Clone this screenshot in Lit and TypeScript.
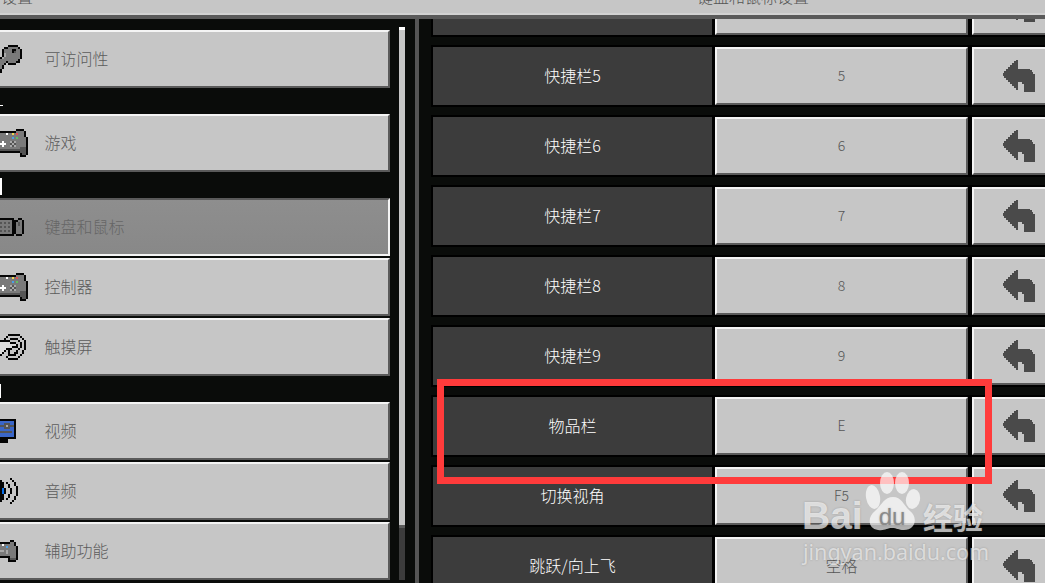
import { LitElement, html, css, svg } from "lit";
import { customElement } from "lit/decorators.js";

const PAL: Record<string, string> = {
  K: "#050505", G: "#7a7a7a", D: "#555555", L: "#a9a9a9", W: "#ffffff", H: "#dcdcdc",
  Y: "#f0d850", R: "#e05050", B: "#4aa0e8", V: "#60c060", S: "#3a66c8", M: "#0a6fe8",
};

const ICONS: Record<string, string[]> = {
  key: [
    "....KKKKK..", "..KKGGGGGK.", ".KGGGGKKGGK", ".KGGGGKDGGK", ".KLGGGGGGGK", ".KLGGGGGGGK", "KLGGGGGGGGK",
    "GGGGGGGGGK.", "GGGKGGGGKK.", "GGK.KKKK...", "GK.........", "GK.........", "K..........", "K..........",
  ],
  pad: [
    "........KKKK..", "KKKKKKKKGGGGK.", "GGGWGGYGRGGGK.", "GGGGGGGGGGGGK.", "GGGGGGBGVGGGGK", "GGGGGGGGGGGGGK", "GWGGGLDLGGGGGK",
    "WWWGGDLDGGGGGK", "GWGGGLDLGGGGGK", "GGGGGGGGGGDDDK", "DDDDDDDDDDDDDK", "KKKKKKKKKKDDDK", "..........KDDK", "..........KKK.",
  ],
  mouse: [
    "KKKKKKK..KK.", "GGGGGGKKKGGK", "DGDGDGKKGDGK", "GGGGGGKKGDGK", "DGDGDGKKGGGK", "GGGGGGKKGGGK", "DGDGDGKKGGGK", "GGGGGGKKGGGK", "KKKKKKK.KKK.",
  ],
  touch: [
    "....KKKKKK...", "...K......K..", "..K..KKKK..K.", "KKKKK....K..K", "HHHHHKKK..K.K", "HHHHHHHHK.K.K", "HHHHHHKKK.K.K",
    "HHHKKK...K..K", "HHK.K...K..K.", "HK..K..KK..K.", "K...KKKK..K..", "...K.....K...", "....KKKKK....",
  ],
  video: [
    "KKKKKKKK", "SSSSSSSK", "SSDDDSSK", "DDDLDDDK", "SSDDDSSK", "SSSSSSSK", "DDDDDDSK", "SSSSSSSK", "SSSSSSSK", "KKKKKKKK", "KKKK....", "KKKK....",
  ],
  audio: [
    ".....K...", "K.....K..", "KK.K...K.", "KK..K..K.", "KK..K...K", "KMK..K..K", "KMK..K..K", "KMK..K..K", "KK..K...K", "KK..K..K.", "KK.K...K.", "K.....K..", ".....K...",
  ],
  assist: [
    ".....KK..", "KKKKKGGK.", "GWGGGGGK.", "GGGBGGGGK", "GGGGGGGGK", "LLGLGGGGK", "GGGLGGGGK", "GGGGGGGGK", "KKKKKGGGK", "....KDDDK", "....KKKK.",
  ],
};

function pixelIcon(name: string) {
  const rows = ICONS[name];
  const w = rows[0].length;
  const h = rows.length;
  return html`<svg class="pix" width=${w * 2} height=${h * 2} viewBox="0 0 ${w} ${h}" shape-rendering="crispEdges">
    ${rows.map((r, y) =>
      [...r].map((c, x) =>
        c === "." ? null : svg`<rect x=${x} y=${y} width="1" height="1" fill=${PAL[c]}></rect>`
      )
    )}
  </svg>`;
}

const UNDO = html`<svg class="undo" width="32" height="32" viewBox="0 0 32 32" shape-rendering="crispEdges">
  <path fill="#4a4a4a" d="M13 0H15V9H27V10H29V12H30V14H32V32H21V24H19V22H15V30H13V28H11V26H9V24H7V22H5V20H3V18H1V16H0V13H1V11H3V9H5V7H7V5H9V3H11V1H13Z"></path>
</svg>`;

type Nav = { icon: string; label: string; active?: boolean };
type Group = { mark: string; items: Nav[] };

const GROUPS: Group[] = [
  { mark: "", items: [{ icon: "key", label: "可访问性" }] },
  { mark: "m1", items: [{ icon: "pad", label: "游戏" }] },
  {
    mark: "m2",
    items: [
      { icon: "mouse", label: "键盘和鼠标", active: true },
      { icon: "pad", label: "控制器" },
      { icon: "touch", label: "触摸屏" },
    ],
  },
  {
    mark: "m3",
    items: [
      { icon: "video", label: "视频" },
      { icon: "audio", label: "音频" },
      { icon: "assist", label: "辅助功能" },
    ],
  },
];

const BINDINGS: [string, string, boolean?][] = [
  ["快捷栏4", "4"],
  ["快捷栏5", "5"],
  ["快捷栏6", "6"],
  ["快捷栏7", "7"],
  ["快捷栏8", "8"],
  ["快捷栏9", "9"],
  ["物品栏", "E"],
  ["切换视角", "F5"],
  ["跳跃/向上飞", "空格", true],
];

@customElement("app-root")
export class AppRoot extends LitElement {
  static styles = css`
    :host {
      display: block;
      width: 1045px;
      height: 583px;
      overflow: hidden;
      position: relative;
      background: #0a0c0a;
      font-family: "Noto Sans CJK SC", "Noto Sans", sans-serif;
      font-size: 16px;
      font-weight: 300;
    }
    .page { display: flex; flex-direction: column; height: 583px; }
    .header {
      flex: none;
      height: 13px;
      background: #c6c6c6;
      border-bottom: 2px solid #d2d2d2;
      box-shadow: 0 4px 0 #5a5a5a;
      display: grid;
      grid-template-columns: 697px 1fr;
      overflow: hidden;
      color: #555;
      line-height: 16px;
    }
    .header span { margin-top: -12px; }
    .header span:first-child { padding-left: 1px; }
    .body { flex: 1; display: flex; min-height: 0; margin-top: 4px; overflow: hidden; }
    .left { flex: none; width: 390px; padding-top: 11px; }
    .group { display: flex; flex-direction: column; gap: 2px; }
    .head { height: 26px; box-sizing: border-box; }
    .mark { background: #fff; }
    .m1 { padding-top: 17px; }
    .m1 .mark { width: 3px; height: 1px; }
    .m2 { padding-top: 6px; }
    .m2 .mark { width: 2px; height: 17px; }
    .m3 { padding-top: 8px; }
    .m3 .mark { width: 1px; height: 14px; }
    .nav {
      height: 58px;
      box-sizing: border-box;
      background: #c6c6c6;
      border-top: 2px solid #f4f4f4;
      border-bottom: 2px solid #5a5a5a;
      border-right: 2px solid #5a5a5a;
      display: flex;
      align-items: center;
      color: #5c5c5c;
    }
    .nav span { padding-bottom: 2px; }
    .nav.active {
      background: linear-gradient(#8e8e8e, #888888);
      border-top-color: #5a5a5a;
      border-bottom-color: #f4f4f4;
      border-right-color: #f4f4f4;
      color: #666;
    }
    .icon { flex: none; width: 44.5px; display: flex; align-items: center; }
    .pix { display: block; }
    .scroll { flex: none; width: 6px; margin-left: 9px; margin-top: 8px; height: 553px; display: flex; flex-direction: column; }
    .thumb { flex: none; height: 501px; box-sizing: border-box; background: #c6c6c6; border-top: 3px solid #fff; border-bottom: 3px solid #5a5a5a; }
    .track { flex: 1; background: #3c3c3c; }
    .divider { flex: none; width: 4px; margin-left: 10px; background: #555; }
    .right { flex: 1; min-width: 0; padding-left: 14px; overflow: hidden; }
    .rows { display: flex; flex-direction: column; gap: 12px; margin-top: -42px; }
    .row { flex: none; height: 58px; display: flex; background: #000; box-shadow: 0 0 0 2px #000; }
    .label {
      flex: none;
      width: 279px;
      box-sizing: border-box;
      padding-bottom: 2px;
      background: #3c3c3c;
      color: #fff;
      display: flex;
      align-items: center;
      justify-content: center;
    }
    .value {
      flex: none;
      width: 253px;
      margin-left: 3px;
      box-sizing: border-box;
      padding-bottom: 2px;
      background: #c6c6c6;
      border-top: 2px solid #f4f4f4;
      border-left: 2px solid #f4f4f4;
      border-bottom: 2px solid #5a5a5a;
      border-right: 2px solid #5a5a5a;
      display: flex;
      align-items: center;
      justify-content: center;
      color: #555;
      font-size: 14px;
    }
    .value.wide { font-size: 16px; }
    .reset {
      flex: 1;
      margin-left: 4px;
      box-sizing: border-box;
      background: #c6c6c6;
      border-top: 2px solid #f4f4f4;
      border-left: 2px solid #f4f4f4;
      border-bottom: 2px solid #5a5a5a;
      display: flex;
      align-items: center;
      padding-left: 29px;
    }
    .undo { display: block; }
    .highlight {
      position: absolute;
      left: 437px;
      top: 379px;
      width: 555px;
      height: 105px;
      box-sizing: border-box;
      border: 7px solid #ff3b3b;
    }
    .wm {
      position: absolute;
      left: 800px;
      top: 470px;
      width: 245px;
      height: 113px;
      color: rgba(255, 255, 255, 0.68);
      text-shadow: 0 0 2px rgba(90, 90, 90, 0.4);
    }
    .wm svg { position: absolute; left: 58px; top: 0; }
    .bai { position: absolute; left: 2px; top: 22px; font: bold 39px/48px "Liberation Sans", sans-serif; }
    .jy { position: absolute; left: 123px; top: 26px; font: bold 30px/40px "Noto Sans CJK SC", sans-serif; }
    .url { position: absolute; left: 3px; top: 69px; font: 21.5px/26px "Noto Sans", sans-serif; color: rgba(255, 255, 255, 0.6); }
  `;

  render() {
    return html`
      <div class="page">
        <div class="header"><span>设置</span><span>键盘和鼠标设置</span></div>
        <div class="body">
          <div class="left">
            ${GROUPS.map(
              (g) => html`
                ${g.mark ? html`<div class="head ${g.mark}"><div class="mark"></div></div>` : null}
                <div class="group">
                  ${g.items.map(
                    (n) => html`<div class="nav ${n.active ? "active" : ""}">
                      <div class="icon">${pixelIcon(n.icon)}</div>
                      <span>${n.label}</span>
                    </div>`
                  )}
                </div>
              `
            )}
          </div>
          <div class="scroll"><div class="thumb"></div><div class="track"></div></div>
          <div class="divider"></div>
          <div class="right">
            <div class="rows">
              ${BINDINGS.map(
                ([a, b, wide]) => html`<div class="row">
                  <div class="label">${a}</div>
                  <div class="value ${wide ? "wide" : ""}">${b}</div>
                  <div class="reset">${UNDO}</div>
                </div>`
              )}
            </div>
          </div>
        </div>
      </div>
      <div class="highlight"></div>
      <div class="wm">
        <svg width="64" height="64" viewBox="0 0 64 64">
          <g fill="rgba(255,255,255,0.68)">
            <ellipse cx="15" cy="27" rx="7" ry="12" transform="rotate(-10 15 27)"></ellipse>
            <ellipse cx="29" cy="13" rx="7" ry="11"></ellipse>
            <ellipse cx="44" cy="13" rx="7" ry="11"></ellipse>
            <ellipse cx="55" cy="29" rx="7" ry="10" transform="rotate(10 55 29)"></ellipse>
            <path d="M35 27C44 27 46 36 52 41C60 47 58 60 46 60C40 60 39 58 34 58C29 58 27 61 20 60C10 59 9 47 17 41C23 36 26 27 35 27Z"></path>
          </g>
          <text x="34" y="55" text-anchor="middle" font-family="Liberation Sans" font-size="24" fill="#8a8a8a">du</text>
        </svg>
        <span class="bai">Bai</span>
        <span class="jy">经验</span>
        <span class="url">jingyan.baidu.com</span>
      </div>
    `;
  }
}
